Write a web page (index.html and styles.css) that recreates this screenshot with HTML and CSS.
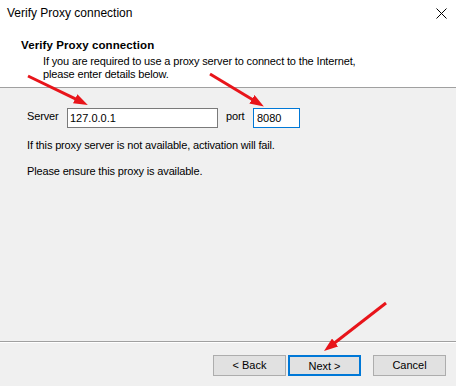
FILE: index.html
```html
<!DOCTYPE html>
<html>
<head>
<meta charset="utf-8">
<link rel="stylesheet" href="styles.css">
</head>
<body>
<div class="dialog">
  <div class="header">
    <div class="titlebar">
      <span class="title">Verify Proxy connection</span>
      <svg class="close" width="11" height="11" viewBox="0 0 11 11"><path d="M0.5 0.5 L10.5 10.5 M10.5 0.5 L0.5 10.5" stroke="#000" stroke-width="1" fill="none"/></svg>
    </div>
    <div class="banner">
      <div class="heading">Verify Proxy connection</div>
      <div class="subtitle">If you are required to use a proxy server to connect to the Internet,<br>please enter details below.</div>
    </div>
  </div>
  <div class="content">
    <div class="row">
      <span class="label server-label">Server</span>
      <div class="input server">127.0.0.1</div>
      <span class="label port-label">port</span>
      <div class="input port focused">8080</div>
    </div>
    <p class="note first">If this proxy server is not available, activation will fail.</p>
    <p class="note">Please ensure this proxy is available.</p>
  </div>
  <div class="separator"></div>
  <div class="footer">
    <button class="btn">&lt; Back</button>
    <button class="btn default">Next &gt;</button>
    <button class="btn cancel">Cancel</button>
  </div>
  <svg class="arrows" width="456" height="386" viewBox="0 0 456 386">
    <defs>
      <marker id="ah" viewBox="0 0 14 10" refX="2" refY="5" markerWidth="14" markerHeight="10" orient="auto" markerUnits="userSpaceOnUse">
        <path d="M0,0 L14,5 L0,10 z" fill="#e8141a"/>
      </marker>
    </defs>
    <line x1="28" y1="76" x2="77" y2="99.7" stroke="#e8141a" stroke-width="3" marker-end="url(#ah)"/>
    <line x1="210" y1="74" x2="253.6" y2="100.3" stroke="#e8141a" stroke-width="3" marker-end="url(#ah)"/>
    <line x1="386" y1="303" x2="333.5" y2="343.7" stroke="#e8141a" stroke-width="3" marker-end="url(#ah)"/>
  </svg>
</div>
</body>
</html>
```

FILE: styles.css
```css
* { box-sizing: border-box; }
html, body { margin: 0; padding: 0; }
body {
  width: 456px;
  height: 386px;
  background: #f0f0f0;
  font-family: "Liberation Sans", Arial, sans-serif;
  font-size: 11px;
  color: #000;
  overflow: hidden;
}
.dialog {
  position: relative;
  width: 456px;
  height: 386px;
  display: flex;
  flex-direction: column;
  letter-spacing: -0.15px;
}
.header {
  background: #fff;
  height: 88px;
  border-bottom: 1px solid #a0a0a0;
  flex: none;
}
.titlebar {
  height: 30px;
  display: flex;
  justify-content: space-between;
  align-items: flex-start;
  padding-left: 7px;
  padding-right: 9px;
  letter-spacing: 0;
}
.title {
  font-size: 12px;
  line-height: 16px;
  padding-top: 5px;
}
.close {
  margin-top: 8px;
}
.banner {
  padding-left: 21px;
  padding-top: 9px;
}
.heading {
  font-weight: bold;
  font-size: 11.5px;
  letter-spacing: 0.1px;
  line-height: 13px;
}
.subtitle {
  margin-top: 3px;
  padding-left: 22px;
  line-height: 13px;
}
.content {
  flex: 1;
  padding: 20px 0 0 27px;
}
.row {
  display: flex;
  align-items: center;
  height: 20px;
}
.label {
  line-height: 13px;
  margin-top: -3px;
}
.server-label {
  width: 40px;
}
.input {
  height: 20px;
  background: #fff;
  border: 1px solid #7a7a7a;
  padding: 3px 0 0 2px;
  line-height: 13px;
  letter-spacing: 0;
}
.server {
  width: 151px;
}
.port-label {
  margin-left: 8px;
  width: 27px;
}
.port {
  width: 47px;
  padding-left: 3px;
}
.focused {
  border-color: #0078d7;
}
.note {
  margin: 0;
  line-height: 13px;
}
.note.first {
  margin-top: 11px;
}
.note + .note {
  margin-top: 13px;
}
.separator {
  flex: none;
  border-top: 1px solid #a0a0a0;
  border-bottom: 1px solid #fff;
}
.footer {
  flex: none;
  height: 43px;
  display: flex;
  justify-content: flex-end;
  align-items: flex-start;
  padding: 12px 10px 0 0;
}
.btn {
  width: 73px;
  height: 21px;
  background: #e1e1e1;
  border: 1px solid #adadad;
  font-family: "Liberation Sans", Arial, sans-serif;
  font-size: 11px;
  color: #000;
  padding: 0;
  margin: 0;
  line-height: 19px;
}
.btn.default {
  margin-left: 2px;
  border: 2px solid #0078d7;
}
.btn.cancel {
  margin-left: 12px;
}
.arrows {
  position: absolute;
  left: 0;
  top: 0;
  pointer-events: none;
}
```
